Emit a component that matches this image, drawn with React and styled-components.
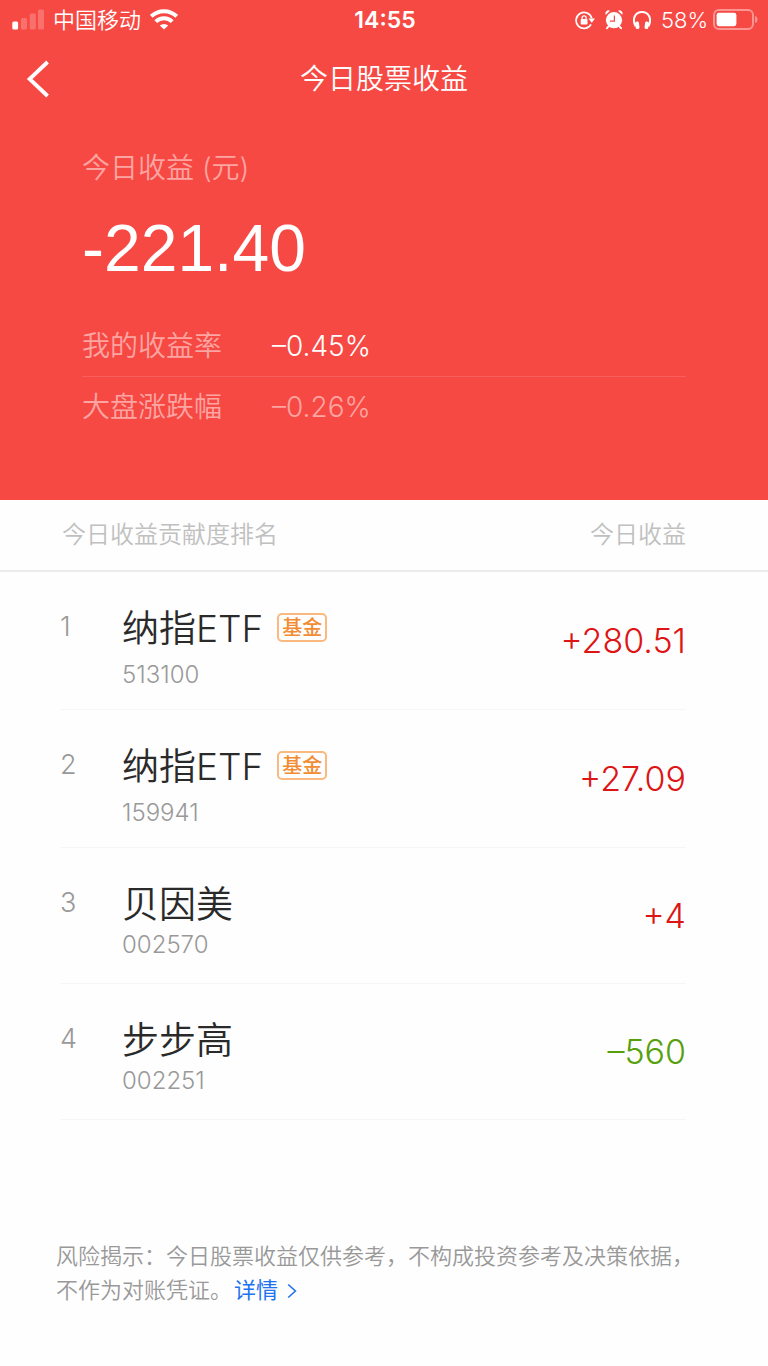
import styled, { createGlobalStyle, ThemeProvider } from "styled-components"

const theme = {
    color: {
        red: "#f74944",
        faded: "#fca5a2",
        rule: "#f95f5a",
        up: "#dd1515",
        down: "#56a00c",
        ink: "#2a2a2a",
        grey: "#999999",
        light: "#c0c0c0",
        line: "#ebebeb",
        softLine: "#f6f6f6",
        orange: "#f28c33",
        blue: "#1f73f0",
    },
}

const GlobalStyle = createGlobalStyle`
    * {
        box-sizing: border-box;
    }
    body {
        margin: 0;
        background-color: #fefefe;
        font-family: Inter, "Noto Sans CJK SC", sans-serif;
        font-weight: 350;
    }
`
const Hero = styled.header`
    background-color: ${({ theme }) => theme.color.red};
    color: white;
`
const StatusBar = styled.div`
    display: grid;
    grid-template-columns: 1fr auto 1fr;
    align-items: center;
    height: 40px;
    padding: 0 10px 0 12px;
    font-size: 22px;
`
const StatusGroup = styled.div`
    display: flex;
    align-items: center;
    justify-content: ${({ $end }) => ($end ? "flex-end" : "flex-start")};
    gap: ${({ $end }) => ($end ? "10px" : "9px")};
    line-height: 38px;
    svg {
        display: block;
        flex: none;
    }
`
const Charge = styled.span`
    display: flex;
    align-items: center;
    gap: 5px;
`
const Clock = styled.time`
    font-size: 23px;
    font-weight: 600;
`
const NavBar = styled.nav`
    display: grid;
    grid-template-columns: 1fr auto 1fr;
    align-items: center;
    height: 78px;
    padding: 0 26px;
`
const BackButton = styled.button`
    justify-self: start;
    padding: 0;
    border: 0;
    background: none;
    color: inherit;
    svg {
        display: block;
    }
`
const Title = styled.h1`
    margin: 0;
    font-size: 28px;
    font-weight: 350;
    line-height: 42px;
`
const Summary = styled.section`
    padding: 30px 82px 63px;
`
const Caption = styled.p`
    margin: 0;
    color: ${({ theme }) => theme.color.faded};
    font-size: 28px;
    line-height: 40px;
`
const Total = styled.p`
    margin: 20px 0 28px;
    font-family: "Liberation Sans", sans-serif;
    font-size: 66px;
    font-weight: 400;
    line-height: 80px;
`
const Rates = styled.dl`
    margin: 0;
`
const Rate = styled.div`
    display: grid;
    grid-template-columns: 190px 1fr;
    font-size: 28px;
    line-height: 60px;
    color: ${({ theme }) => theme.color.faded};
    & + & {
        border-top: 1px solid ${({ theme }) => theme.color.rule};
    }
    dd {
        margin: 0;
        color: ${({ $bright }) => ($bright ? "white" : "inherit")};
    }
`
const Ranking = styled.table`
    display: block;
    thead,
    tbody {
        display: block;
    }
`
const HeadRow = styled.tr`
    display: flex;
    justify-content: space-between;
    height: 72px;
    padding: 0 82px 0 62px;
    border-bottom: 2px solid ${({ theme }) => theme.color.line};
    color: ${({ theme }) => theme.color.light};
    font-size: 24px;
    line-height: 70px;
    th {
        padding: 0;
        font-weight: 350;
    }
`
const Row = styled.tr`
    display: grid;
    grid-template-columns: 62px 1fr auto;
    height: ${({ $tagged }) => ($tagged ? "138px" : "136px")};
    margin: 0 82px 0 60px;
    border-bottom: 1px solid ${({ theme }) => theme.color.softLine};
    td {
        padding: 0;
    }
`
const Rank = styled.td`
    margin-top: 30px;
    color: ${({ theme }) => theme.color.grey};
    font-size: 27px;
    line-height: 50px;
`
const Stock = styled.td`
    margin-top: 32px;
`
const Name = styled.div`
    display: flex;
    align-items: center;
    gap: 14px;
    margin-bottom: ${({ $tagged }) => ($tagged ? "6px" : "0")};
    color: ${({ theme }) => theme.color.ink};
    font-size: 37px;
    line-height: 50px;
`
const Tag = styled.span`
    margin-bottom: 4px;
    padding: 2px 3px 0;
    border: 2px solid #f9b97f;
    border-radius: 5px;
    color: ${({ theme }) => theme.color.orange};
    font-size: 20px;
    font-weight: 500;
    line-height: 23px;
`
const Code = styled.div`
    color: ${({ theme }) => theme.color.grey};
    font-size: 24px;
    line-height: 30px;
`
const Amount = styled.td`
    align-self: center;
    color: ${({ theme, $down }) => ($down ? theme.color.down : theme.color.up)};
    font-size: 34px;
    line-height: 44px;
`
const Notice = styled.footer`
    margin-top: 119px;
    padding: 0 56px 50px;
    color: ${({ theme }) => theme.color.grey};
    font-size: 22px;
    line-height: 34px;
    p {
        margin: 0;
    }
`
const DetailLink = styled.a`
    margin-left: 2px;
    color: ${({ theme }) => theme.color.blue};
    font-weight: 400;
    text-decoration: none;
    svg {
        margin-left: 9px;
        vertical-align: -1px;
    }
`

const Signal = () => (
    <svg width="32" height="22" viewBox="0 0 32 22" fill="white">
        <rect x="0.3" y="12.6" width="5.8" height="8" rx="1.5" />
        <g opacity="0.22">
            <rect x="9" y="9" width="6" height="11.6" rx="1.5" />
            <rect x="17.8" y="4.6" width="6" height="16" rx="1.5" />
            <rect x="26" y="0.6" width="6" height="20" rx="1.5" />
        </g>
    </svg>
)

const Wifi = () => (
    <svg width="28" height="22" viewBox="0 0 28 22" fill="none" stroke="white" strokeWidth="4">
        <path d="M1.3 7.4 A18 18 0 0 1 26.7 7.4" />
        <path d="M5.8 12.6 A11.6 11.6 0 0 1 22.2 12.6" />
        <path d="M14 20.6 L9.8 16.6 A6 6 0 0 1 18.2 16.6 Z" fill="white" stroke="none" />
    </svg>
)

const RotationLock = () => (
    <svg width="20" height="20" viewBox="0 0 20 20" fill="none" stroke="white" strokeWidth="1.7">
        <path d="M16 14.4 A8 8 0 1 1 16.8 8.4" />
        <path d="M13.4 8.6 H20 L16.8 12.8 Z" fill="white" stroke="none" />
        <rect x="5.7" y="9" width="6.8" height="5.6" rx="0.8" fill="white" stroke="none" />
        <path d="M7.1 9.4 V7.8 A2 2 0 0 1 11.1 7.8 V9.4" strokeWidth="1.3" />
    </svg>
)

const Alarm = () => (
    <svg width="18" height="20" viewBox="0 0 18 20" fill="white">
        <circle cx="9" cy="10.2" r="8.1" />
        <path d="M0.8 4.8 A3 3 0 0 1 5 0.8 Z M17.2 4.8 A3 3 0 0 0 13 0.8 Z" />
        <path d="M3.6 16.4 L2 18.2 M14.4 16.4 L16 18.2" stroke="white" strokeWidth="2" strokeLinecap="round" />
        <path d="M9.4 5.4 V11.2 H5" fill="none" stroke="#f74944" strokeWidth="1.2" />
    </svg>
)

const Headphones = () => (
    <svg width="18" height="20" viewBox="0 0 18 20" fill="white">
        <path d="M2.6 16.4 C-1.4 8.6 2.4 2 9 2 C15.6 2 19.4 8.6 15.4 16.4" fill="none" stroke="white" strokeWidth="2" />
        <rect x="2.4" y="11.6" width="3.8" height="7.4" rx="1.4" transform="rotate(-8 4.3 15.3)" />
        <rect x="11.8" y="11.6" width="3.8" height="7.4" rx="1.4" transform="rotate(8 13.7 15.3)" />
    </svg>
)

const Battery = () => (
    <svg width="45" height="22" viewBox="0 0 45 22">
        <rect x="1" y="1" width="39" height="19" rx="5" fill="none" stroke="white" strokeOpacity="0.42" strokeWidth="2" />
        <rect x="3.6" y="3.8" width="19.8" height="13.4" rx="2.4" fill="white" />
        <path d="M42 7 C45.4 8 45.4 13 42 14 Z" fill="white" fillOpacity="0.42" />
    </svg>
)

const stocks = [
    { code: "513100", name: "纳指ETF", tag: "基金", amount: "+280.51" },
    { code: "159941", name: "纳指ETF", tag: "基金", amount: "+27.09" },
    { code: "002570", name: "贝因美", amount: "+4" },
    { code: "002251", name: "步步高", amount: "–560", down: true },
]

const App = () => {
    return <ThemeProvider theme={theme}>
        <GlobalStyle />
        <Hero>
            <StatusBar>
                <StatusGroup>
                    <Signal />
                    <span>中国移动</span>
                    <Wifi />
                </StatusGroup>
                <Clock>14:55</Clock>
                <StatusGroup $end>
                    <RotationLock />
                    <Alarm />
                    <Headphones />
                    <Charge>58%<Battery /></Charge>
                </StatusGroup>
            </StatusBar>
            <NavBar>
                <BackButton aria-label="返回">
                    <svg width="24" height="38" viewBox="0 0 24 38" fill="none" stroke="white" strokeWidth="3.8">
                        <path d="M21.6 2 L3.6 19 L21.6 36" />
                    </svg>
                </BackButton>
                <Title>今日股票收益</Title>
            </NavBar>
            <Summary>
                <Caption>今日收益 (元)</Caption>
                <Total>-221.40</Total>
                <Rates>
                    <Rate $bright>
                        <dt>我的收益率</dt>
                        <dd>–0.45%</dd>
                    </Rate>
                    <Rate>
                        <dt>大盘涨跌幅</dt>
                        <dd>–0.26%</dd>
                    </Rate>
                </Rates>
            </Summary>
        </Hero>
        <Ranking>
            <thead>
                <HeadRow>
                    <th scope="col">今日收益贡献度排名</th>
                    <th scope="col">今日收益</th>
                </HeadRow>
            </thead>
            <tbody>
                {stocks.map(({ code, name, tag, amount, down }, index) => (
                    <Row key={code} $tagged={!!tag}>
                        <Rank>{index + 1}</Rank>
                        <Stock>
                            <Name $tagged={!!tag}>
                                {name}
                                {tag && <Tag>{tag}</Tag>}
                            </Name>
                            <Code>{code}</Code>
                        </Stock>
                        <Amount $down={down}>{amount}</Amount>
                    </Row>
                ))}
            </tbody>
        </Ranking>
        <Notice>
            <p>
                <span>风险揭示：今日股票收益仅供参考，不构成投资参考及决策依据，</span>
                <span>不作为对账凭证。</span>
                <DetailLink href="#detail">详情<svg width="10" height="16" viewBox="0 0 10 16" fill="none" stroke="currentColor" strokeWidth="1.6">
                    <path d="M1.2 1.5 L8.4 8 L1.2 14.5" />
                </svg></DetailLink>
            </p>
        </Notice>
    </ThemeProvider>
}

export default App
